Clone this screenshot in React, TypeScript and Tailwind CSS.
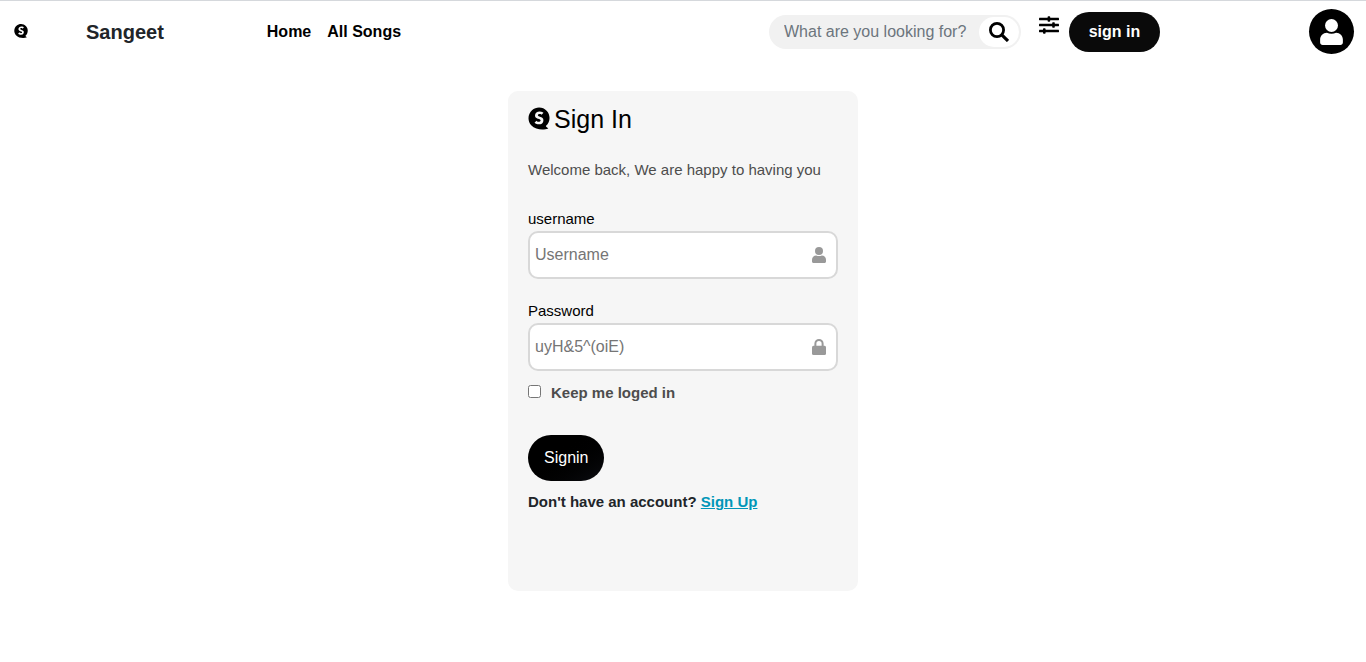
import React from "react";
import { FaSpeakap } from "react-icons/fa";

function UserIcon({ className }: { className: string }) {
  return (
    <svg viewBox="0 0 448 512" fill="currentColor" aria-hidden="true" className={className}>
      <circle cx="224" cy="128" r="128" />
      <path d="M134 272c26 13 58 18 90 18s64-5 90-18c76 0 134 60 134 134v58c0 26-22 48-48 48H48c-26 0-48-22-48-48v-58c0-74 58-134 134-134z" />
    </svg>
  );
}

function LockIcon({ className }: { className: string }) {
  return (
    <svg viewBox="0 0 448 512" fill="currentColor" aria-hidden="true" className={className}>
      <rect y="216" width="448" height="296" rx="48" />
      <path d="M108 230v-82a116 116 0 0 1 232 0v82" fill="none" stroke="currentColor" strokeWidth="64" />
    </svg>
  );
}

function SearchIcon({ className }: { className: string }) {
  return (
    <svg viewBox="0 0 20 20" fill="none" stroke="currentColor" aria-hidden="true" className={className}>
      <circle cx="8" cy="8" r="6.6" strokeWidth="2.8" />
      <path d="M12.8 12.8l6.2 6.2" strokeWidth="3.2" />
    </svg>
  );
}

function SlidersIcon({ className }: { className: string }) {
  return (
    <svg viewBox="0 0 20 18" fill="currentColor" aria-hidden="true" className={className}>
      <rect y="1.8" width="20" height="2.4" rx=".4" />
      <rect y="7.8" width="20" height="2.4" rx=".4" />
      <rect y="13.8" width="20" height="2.4" rx=".4" />
      <rect x="8.6" y=".2" width="2.6" height="5.6" rx=".8" />
      <rect x="13.2" y="6.2" width="2.6" height="5.6" rx=".8" />
      <rect x="4" y="12.2" width="2.6" height="5.6" rx=".8" />
    </svg>
  );
}

function Header() {
  return (
    <header className="flex items-center border-t border-[#d5d8dc] pt-2 pr-3 pb-2 pl-3.5">
      <a href="#home" aria-label="Sangeet logo" className="pb-0.5 text-black">
        <FaSpeakap className="h-4 w-3.5" />
      </a>
      <a href="#home" className="ml-[58px] text-xl font-bold text-[#212529]">
        Sangeet
      </a>
      <nav className="ml-[103px] flex gap-4 font-bold text-black">
        <a href="#home">Home</a>
        <a href="#songs">All Songs</a>
      </nav>
      <div className="ml-auto flex items-center">
        <form
          role="search"
          className="flex h-[34px] items-center rounded-full bg-[#f1f1f1] pr-0.5 pl-[15px]"
          onSubmit={(e) => e.preventDefault()}
        >
          <input
            type="text"
            aria-label="Search"
            placeholder="What are you looking for?"
            className="w-[195px] bg-transparent text-black outline-none placeholder:text-[#6c757d]"
          />
          <button
            type="submit"
            aria-label="Search"
            className="flex h-[30px] w-10 items-center justify-center rounded-full bg-white text-black"
          >
            <SearchIcon className="size-5" />
          </button>
        </form>
        <button type="button" aria-label="Filters" className="mb-3.5 ml-[18px] text-black">
          <SlidersIcon className="h-[18px] w-5" />
        </button>
        <button
          type="button"
          className="ml-2.5 h-10 w-[91px] rounded-full bg-[#0a0a0a] font-bold text-white"
        >
          sign in
        </button>
        <button
          type="button"
          aria-label="Profile"
          className="ml-[149px] flex size-[45px] items-center justify-center rounded-full bg-black text-white"
        >
          <UserIcon className="h-[26px] w-[23px]" />
        </button>
      </div>
    </header>
  );
}

type FieldProps = {
  id: string;
  type: string;
  label: string;
  placeholder: string;
  icon: React.ReactNode;
};

function Field({ id, type, label, placeholder, icon }: FieldProps) {
  return (
    <div className="flex flex-col">
      <label htmlFor={id} className="text-[15px] leading-6 text-black">
        {label}
      </label>
      <div className="flex h-12 items-center rounded-[10px] border-2 border-[#d8d8d8] bg-white pr-2.5 pl-[5px]">
        <input
          id={id}
          type={type}
          placeholder={placeholder}
          className="min-w-0 flex-1 bg-transparent text-black outline-none placeholder:text-[#757575]"
        />
        <span className="text-[#999999]">{icon}</span>
      </div>
    </div>
  );
}

export default function App() {
  return (
    <div className="bg-white font-['Liberation_Sans',Arial,sans-serif] text-base text-[#212529]">
      <Header />
      <main className="flex justify-center px-4 pt-[29px] pb-[71px]">
        <form
          className="w-full max-w-[350px] rounded-[10px] bg-[#f6f6f6] px-5 pt-2.5 pb-[77px]"
          onSubmit={(e) => e.preventDefault()}
        >
          <h1 className="flex items-center gap-1 text-[25px] leading-9 text-black">
            <FaSpeakap className="mb-0.5 h-[25px] w-[22px]" />
            Sign In
          </h1>
          <p className="mt-[21px] text-[15px] leading-6 text-[#4d4d4d]">
            Welcome back, We are happy to having you
          </p>
          <div className="mt-[25px] flex flex-col gap-5">
            <Field
              id="username"
              type="text"
              label="username"
              placeholder="Username"
              icon={<UserIcon className="h-4 w-3.5" />}
            />
            <Field
              id="password"
              type="password"
              label="Password"
              placeholder="uyH&5^(oiE)"
              icon={<LockIcon className="h-4 w-3.5" />}
            />
          </div>
          <div className="mt-2.5 flex items-start">
            <input id="keep" type="checkbox" className="mt-1 size-[13px]" />
            <label htmlFor="keep" className="ml-2.5 text-[15px] leading-6 font-bold text-[#4d4d4d]">
              Keep me loged in
            </label>
          </div>
          <button
            type="submit"
            className="mt-[30px] block h-[46px] rounded-full bg-linear-to-br from-black from-30% to-[#0d0e12] px-4 text-white"
          >
            Signin
          </button>
          <p className="mt-[9px] text-[15px] leading-6 font-bold">
            Don't have an account?{" "}
            <a href="#signup" className="text-[#0096b8] underline">
              Sign Up
            </a>
          </p>
        </form>
      </main>
    </div>
  );
}
